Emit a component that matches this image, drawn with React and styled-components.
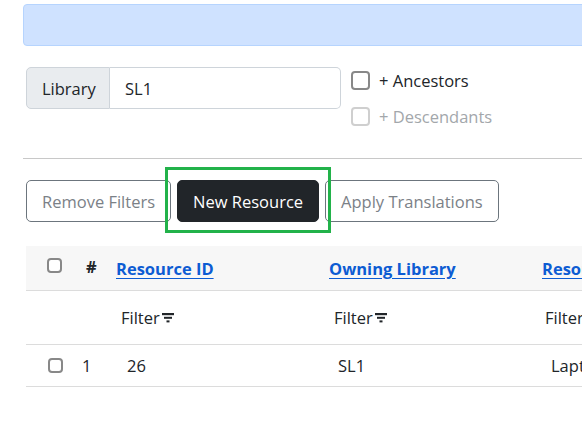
import React from "react";
import styled, { createGlobalStyle } from "styled-components";

const GlobalStyle = createGlobalStyle`
  body {
    margin: 0;
    overflow: hidden;
    background: #fff;
    color: #212529;
    font-family: "Open Sans", "Noto Sans", sans-serif;
    font-size: 16px;
  }
`;

const Page = styled.div`
  width: 720px;
  padding: 4px 0 0 23px;
`;

const Alert = styled.div`
  height: 40px;
  background: #cfe2ff;
  border: 1px solid #b6d4fe;
  border-radius: 4px;
`;

const FilterRow = styled.div`
  display: flex;
  align-items: flex-start;
  gap: 10px;
  margin-top: 21px;
  padding-left: 3px;
`;

const InputGroup = styled.div`
  display: flex;
  height: 42px;
`;

const Addon = styled.span`
  display: flex;
  align-items: center;
  padding: 0 15px;
  width: 84px;
  box-sizing: border-box;
  background: #e9ecef;
  border: 1px solid #ced4da;
  border-radius: 5px 0 0 5px;
  font-size: 16.5px;
`;

const TextInput = styled.input`
  width: 231px;
  box-sizing: border-box;
  border: 1px solid #ced4da;
  border-left: none;
  border-radius: 0 5px 5px 0;
  padding: 0 15px;
  font: inherit;
  font-size: 16.5px;
  color: #212529;
  outline: none;
`;

const CheckStack = styled.div`
  display: flex;
  flex-direction: column;
  gap: 13px;
  padding-top: 2px;
`;

const CheckLabel = styled.label`
  display: flex;
  align-items: center;
  gap: 9px;
  font-size: 16.5px;
  color: ${(p) => (p.disabled ? "#a3a7ab" : "#212529")};
`;

const Box = styled.input.attrs({ type: "checkbox" })`
  appearance: none;
  margin: 0;
  width: ${(p) => p.size || 15}px;
  height: ${(p) => p.size || 15}px;
  border: 2px solid ${(p) => (p.disabled ? "#cfcfcf" : "#888")};
  border-radius: 4px;
  background: #fff;
  flex-shrink: 0;
`;

const Divider = styled.hr`
  margin: 30px 0 0;
  border: none;
  border-top: 1px solid #c8c8c8;
`;

const Toolbar = styled.div`
  display: flex;
  gap: 6px;
  margin-top: 21px;
  padding-left: 3px;
`;

const Button = styled.button`
  height: 42px;
  padding: 0 15px;
  font: inherit;
  font-size: 16.5px;
  border-radius: 5px;
  border: 1px solid ${(p) => (p.dark ? "#212529" : "#6c757d")};
  background: ${(p) => (p.dark ? "#212529" : "#fff")};
  color: ${(p) => (p.dark ? "#fff" : "#7b8187")};
  white-space: nowrap;
`;

const Highlight = styled.span`
  position: relative;
  display: inline-flex;
  &::after {
    content: "";
    position: absolute;
    top: -13px;
    bottom: -11px;
    left: -12px;
    right: -12px;
    border: 3px solid #22b24a;
    pointer-events: none;
  }
`;

const Table = styled.div`
  margin-top: 24px;
  margin-left: 3px;
`;

const Row = styled.div`
  display: grid;
  grid-template-columns: 48px 32px 213px 213px 213px;
  align-items: center;
  height: ${(p) => p.h}px;
  background: ${(p) => (p.head ? "#f7f7f7" : "#fff")};
  border-bottom: 1px solid #dcdcdc;
`;

const Cell = styled.div`
  padding-left: ${(p) => p.pad || 0}px;
  margin-top: ${(p) => p.shift || 0}px;
  display: flex;
  align-items: center;
  white-space: nowrap;
  font-size: 16.5px;
  font-weight: ${(p) => (p.bold ? 700 : 400)};
`;

const SortLink = styled.a`
  color: #0d5cd3;
  text-decoration: underline;
  text-underline-offset: 3px;
  font-weight: 700;
  font-size: 16.5px;
`;

const FilterText = styled.span`
  display: inline-flex;
  align-items: center;
  gap: 2px;
`;

const FilterIcon = () => (
  <svg width="12" height="10" viewBox="0 0 12 10" fill="#212529">
    <rect x="0" y="0" width="12" height="2.2" />
    <rect x="2" y="3.8" width="8" height="2" />
    <rect x="4.5" y="7.4" width="3" height="2" />
  </svg>
);

const Filter = () => (
  <FilterText>
    Filter
    <FilterIcon />
  </FilterText>
);

export default function App() {
  return (
    <>
      <GlobalStyle />
      <Page>
        <Alert />
        <FilterRow>
          <InputGroup>
            <Addon>Library</Addon>
            <TextInput defaultValue="SL1" />
          </InputGroup>
          <CheckStack>
            <CheckLabel>
              <Box size={19} />+ Ancestors
            </CheckLabel>
            <CheckLabel disabled>
              <Box size={19} disabled />+ Descendants
            </CheckLabel>
          </CheckStack>
        </FilterRow>
        <Divider />
        <Toolbar>
          <Button>Remove Filters</Button>
          <Highlight>
            <Button dark>New Resource</Button>
          </Highlight>
          <Button>Apply Translations</Button>
        </Toolbar>
        <Table>
          <Row head h={44}>
            <Cell pad={21} shift={-6}>
              <Box />
            </Cell>
            <Cell pad={12} bold shift={-4}>#</Cell>
            <Cell pad={10}>
              <SortLink>Resource ID</SortLink>
            </Cell>
            <Cell pad={10}>
              <SortLink>Owning Library</SortLink>
            </Cell>
            <Cell pad={10}>
              <SortLink>Resource Name</SortLink>
            </Cell>
          </Row>
          <Row h={53}>
            <Cell />
            <Cell />
            <Cell pad={15}>
              <Filter />
            </Cell>
            <Cell pad={15}>
              <Filter />
            </Cell>
            <Cell pad={13}>
              <Filter />
            </Cell>
          </Row>
          <Row h={41}>
            <Cell pad={22}>
              <Box />
            </Cell>
            <Cell pad={8}>1</Cell>
            <Cell pad={21}>26</Cell>
            <Cell pad={19}>SL1</Cell>
            <Cell pad={19}>Laptop</Cell>
          </Row>
        </Table>
      </Page>
    </>
  );
}
